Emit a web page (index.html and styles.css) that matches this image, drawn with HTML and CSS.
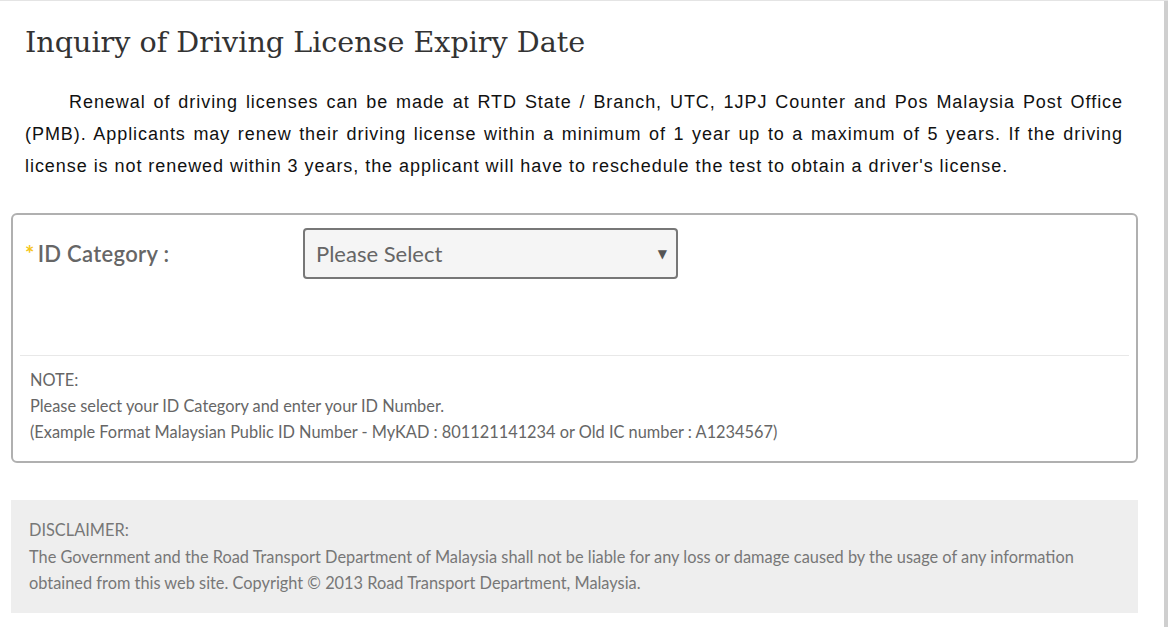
FILE: index.html
```html
<!DOCTYPE html>
<html>
<head>
<meta charset="utf-8">
<link rel="stylesheet" href="styles.css">
</head>
<body>
<div class="page">
  <div class="main">
    <h1 class="title">Inquiry of Driving License Expiry Date</h1>
    <p class="intro">Renewal of driving licenses can be made at RTD State / Branch, UTC, 1JPJ Counter and Pos Malaysia Post Office (PMB). Applicants may renew their driving license within a minimum of 1 year up to a maximum of 5 years. If the driving license is not renewed within 3 years, the applicant will have to reschedule the test to obtain a driver's license.</p>
    <div class="form-box">
      <div class="form-row">
        <label class="label"><span class="req">*</span>ID Category :</label>
        <div class="select">
          <span class="select-text">Please Select</span>
          <span class="select-arrow">&#9660;</span>
        </div>
      </div>
      <div class="note">
        <div>NOTE:</div>
        <div>Please select your ID Category and enter your ID Number.</div>
        <div>(Example Format Malaysian Public ID Number - MyKAD : 801121141234 or Old IC number : A1234567)</div>
      </div>
    </div>
    <div class="disclaimer">
      <div>DISCLAIMER:</div>
      <div>The Government and the Road Transport Department of Malaysia shall not be liable for any loss or damage caused by the usage of any information obtained from this web site. Copyright &copy; 2013 Road Transport Department, Malaysia.</div>
    </div>
  </div>
  <div class="scrollbar"></div>
</div>
</body>
</html>
```

FILE: styles.css
```css
html, body {
  margin: 0;
  padding: 0;
  background: #fff;
}
.page {
  display: flex;
  width: 1168px;
  height: 627px;
  overflow: hidden;
  border-top: 1px solid #e4e4e4;
  box-sizing: border-box;
}
.main {
  width: 1127px;
  margin-left: 11px;
  flex: none;
}
.scrollbar {
  margin-left: auto;
  width: 4px;
  background: #cfcfcf;
}
.title {
  margin: 23px 0 0 14px;
  font-family: "DejaVu Serif", serif;
  font-weight: normal;
  font-size: 28.6px;
  line-height: 36px;
  color: #333;
}
.intro {
  margin: 26px 15px 0 14px;
  font-family: "Liberation Sans", Arial, sans-serif;
  font-size: 18px;
  line-height: 32px;
  color: #111;
  text-align: justify;
  text-indent: 44px;
  letter-spacing: 0.95px;
}
.form-box {
  margin-top: 31px;
  border: 2px solid #b0b0b0;
  border-radius: 6px;
  padding: 0 7px 16px 7px;
}
.form-row {
  display: flex;
  align-items: flex-start;
  height: 141px;
  border-bottom: 1px solid #e8e8e8;
  padding-top: 13px;
  box-sizing: border-box;
}
.label {
  width: 283px;
  height: 51px;
  box-sizing: border-box;
  padding-left: 5px;
  display: flex;
  align-items: center;
  font-family: Lato, sans-serif;
  font-weight: 600;
  font-size: 22px;
  letter-spacing: 0.3px;
  color: #666;
}
.req {
  color: #f5c518;
  font-weight: 700;
  font-size: 22px;
  margin-right: 3px;
}
.select {
  width: 375px;
  height: 51px;
  box-sizing: border-box;
  border: 2px solid #777;
  border-radius: 4px;
  background: #f5f5f5;
  display: flex;
  align-items: center;
  justify-content: space-between;
  padding: 0 9px 0 11px;
  font-family: Lato, sans-serif;
  font-size: 22px;
  color: #666;
}
.select-arrow {
  font-size: 12px;
  color: #555;
  font-family: "DejaVu Sans", sans-serif;
}
.note {
  padding: 11px 10px 0 10px;
  font-family: Lato, sans-serif;
  font-size: 16.35px;
  line-height: 26px;
  color: #666;
}
.disclaimer {
  margin-top: 37px;
  background: #eeeeee;
  padding: 17px 18px 16px 18px;
  font-family: Lato, sans-serif;
  font-size: 16.35px;
  line-height: 26.5px;
  color: #777;
}
```
